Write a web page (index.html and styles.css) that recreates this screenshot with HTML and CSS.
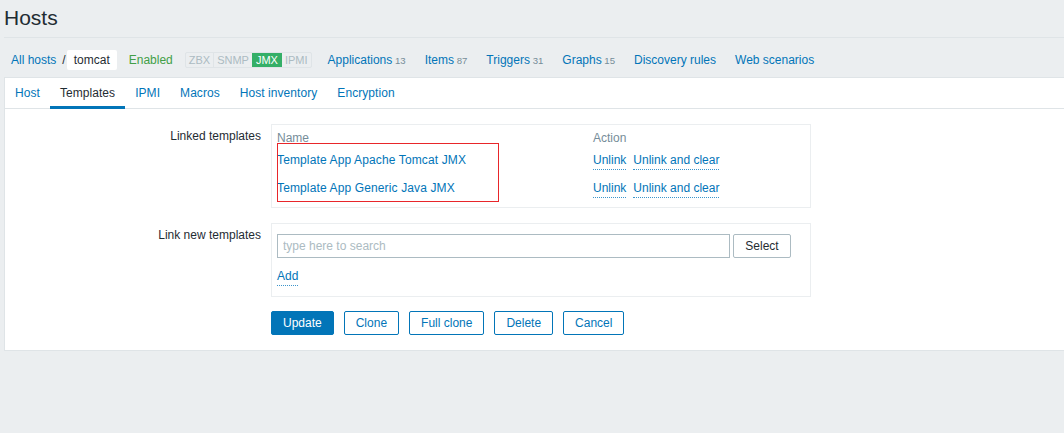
FILE: index.html
```html
<!DOCTYPE html>
<html lang="en">
<head>
<meta charset="utf-8">
<title>Hosts</title>
<link rel="stylesheet" href="styles.css">
</head>
<body>
<div class="wrap">
  <header class="page-head"><h1>Hosts</h1></header>
  <nav class="host-nav">
    <a href="#">All hosts</a><span class="sep">/</span><span class="current">tomcat</span>
    <a href="#" class="enabled">Enabled</a>
    <span class="avail"><span class="av">ZBX</span><span class="av">SNMP</span><span class="av on">JMX</span><span class="av">IPMI</span></span>
    <a href="#" class="nav-item first">Applications</a><span class="count">13</span>
    <a href="#" class="nav-item">Items</a><span class="count">87</span>
    <a href="#" class="nav-item">Triggers</a><span class="count">31</span>
    <a href="#" class="nav-item">Graphs</a><span class="count">15</span>
    <a href="#" class="nav-item">Discovery rules</a>
    <a href="#" class="nav-item">Web scenarios</a>
  </nav>
  <div class="panel">
    <ul class="tabs">
      <li><a href="#">Host</a></li>
      <li class="active"><a href="#">Templates</a></li>
      <li><a href="#">IPMI</a></li>
      <li><a href="#">Macros</a></li>
      <li><a href="#">Host inventory</a></li>
      <li><a href="#">Encryption</a></li>
    </ul>
    <form class="form">
      <div class="form-row row-linked">
        <label class="lbl">Linked templates</label>
        <div class="box linked">
          <div class="tpl-head"><div class="c-name">Name</div><div class="c-act">Action</div></div>
          <div class="tpl-row"><div class="c-name"><a href="#" class="tpl">Template App Apache Tomcat JMX</a></div><div class="c-act"><a href="#" class="act">Unlink</a><a href="#" class="act">Unlink and clear</a></div></div>
          <div class="tpl-row"><div class="c-name"><a href="#" class="tpl">Template App Generic Java JMX</a></div><div class="c-act"><a href="#" class="act">Unlink</a><a href="#" class="act">Unlink and clear</a></div></div>
          <div class="highlight"></div>
        </div>
      </div>
      <div class="form-row row-new">
        <label class="lbl">Link new templates</label>
        <div class="box newbox">
          <div class="search-row"><input type="text" class="search" placeholder="type here to search"><button type="button" class="btn-select">Select</button></div>
          <div class="add-row"><a href="#" class="act">Add</a></div>
        </div>
      </div>
      <div class="form-row">
        <div></div>
        <div class="buttons">
          <button type="button" class="btn primary">Update</button>
          <button type="button" class="btn">Clone</button>
          <button type="button" class="btn">Full clone</button>
          <button type="button" class="btn">Delete</button>
          <button type="button" class="btn">Cancel</button>
        </div>
      </div>
    </form>
  </div>
</div>
</body>
</html>
```
FILE: styles.css
```css
html, body { margin: 0; }
body {
  background: #ebeef0;
  font: 12px/14px "Liberation Sans", Arial, sans-serif;
  color: #1f2c33;
}
a { color: #0275b8; text-decoration: none; }

.wrap { padding-left: 4px; }

.page-head {
  height: 37px;
  border-bottom: 1px solid #dfe4e7;
}
.page-head h1 {
  margin: 0;
  padding-top: 6px;
  font-size: 21px;
  line-height: 24px;
  font-weight: normal;
  color: #1f2c33;
}

.host-nav {
  display: flex;
  align-items: center;
  height: 39px;
  box-sizing: border-box;
  padding: 4px 0 0 7px;
  white-space: nowrap;
}
.sep { margin: 0 1px 0 6px; color: #1f2c33; }
.current {
  background: #fff;
  padding: 0 7px;
  line-height: 20px;
  border-radius: 2px;
}
.enabled { color: #429e47; margin-left: 12px; }
.avail {
  display: flex;
  margin-left: 12px;
  height: 16px;
  box-sizing: border-box;
  border: 1px solid #dfe4e7;
  border-radius: 2px;
  font-size: 11px;
  line-height: 14px;
  color: #acbbc2;
}
.av { padding: 0 3px; border-left: 1px solid #dfe4e7; }
.av:first-child { border-left: 0; }
.av.on { background: #34af67; color: #fff; border-left-color: #34af67; }
.av.on + .av { border-left-color: #34af67; }

.nav-item { margin-left: 19px; }
.nav-item.first { margin-left: 16px; }
.count {
  margin-left: 2.7px;
  font-size: 9.6px;
  color: #768d99;
  align-self: center;
  padding-top: 2px;
}

.panel {
  background: #fff;
  border: 1px solid #dfe4e7;
  border-right: 0;
}

.tabs {
  display: flex;
  align-items: flex-start;
  margin: 0;
  padding: 0;
  list-style: none;
  height: 31px;
  box-sizing: border-box;
  border-bottom: 1px solid #dfe4e7;
  letter-spacing: 0.06px;
}
.tabs a {
  display: block;
  height: 30px;
  box-sizing: border-box;
  padding: 8px 10px 0;
}
.tabs .active a {
  color: #1f2c33;
  height: 31px;
  border-bottom: 3px solid #0275b8;
}

.form { padding: 15px 0 15px; margin: 0; }
.form-row {
  display: grid;
  grid-template-columns: 256px 540px;
  column-gap: 10px;
  align-items: start;
}
.row-linked { margin-bottom: 15px; }
.row-new { margin-bottom: 14px; }
.lbl {
  text-align: right;
  padding-top: 5px;
  color: #1f2c33;
}

.box {
  position: relative;
  border: 1px solid #ebeef0;
}
.linked { padding-bottom: 5px; }
.tpl-head, .tpl-row { display: flex; }
.tpl-head {
  height: 21px;
  padding-top: 6px;
  box-sizing: border-box;
  color: #768d99;
}
.tpl-row {
  height: 28px;
  padding-top: 7px;
  box-sizing: border-box;
}
.c-name { width: 316px; padding-left: 5px; box-sizing: border-box; }
.c-act { padding-left: 5px; display: flex; align-items: flex-start; }
.tpl { letter-spacing: 0.13px; }
.act {
  display: inline-block;
  line-height: 14px;
  padding-bottom: 2px;
  border-bottom: 1px dotted #3d95cb;
}
.act + .act { margin-left: 7px; }

.highlight {
  position: absolute;
  left: 5px;
  top: 18px;
  width: 222px;
  height: 59px;
  box-sizing: border-box;
  border: 1px solid #e8262a;
  pointer-events: none;
}

.newbox { padding: 10px 0 10px 5px; }
.search-row { display: flex; }
.search {
  width: 453px;
  height: 24px;
  box-sizing: border-box;
  margin: 0;
  border: 1px solid #acbbc2;
  border-radius: 0;
  padding: 0 5px;
  font: 12px "Liberation Sans", Arial, sans-serif;
  color: #1f2c33;
  outline: none;
}
.search::placeholder { color: #acbbc2; opacity: 1; }
.btn-select {
  margin: 0 0 0 3px;
  width: 58px;
  height: 24px;
  box-sizing: border-box;
  padding: 0;
  border: 1px solid #acbbc2;
  border-radius: 2px;
  background: #fff;
  color: #1f2c33;
  font: 12px/22px "Liberation Sans", Arial, sans-serif;
}
.add-row { display: flex; margin-top: 11px; }

.buttons { display: flex; gap: 10px; }
.btn {
  height: 24px;
  box-sizing: border-box;
  margin: 0;
  padding: 0 11px;
  border: 1px solid #0275b8;
  border-radius: 2px;
  background: #fff;
  color: #0275b8;
  font: 12px/22px "Liberation Sans", Arial, sans-serif;
}
.btn.primary { background: #0275b8; color: #fff; }
```
